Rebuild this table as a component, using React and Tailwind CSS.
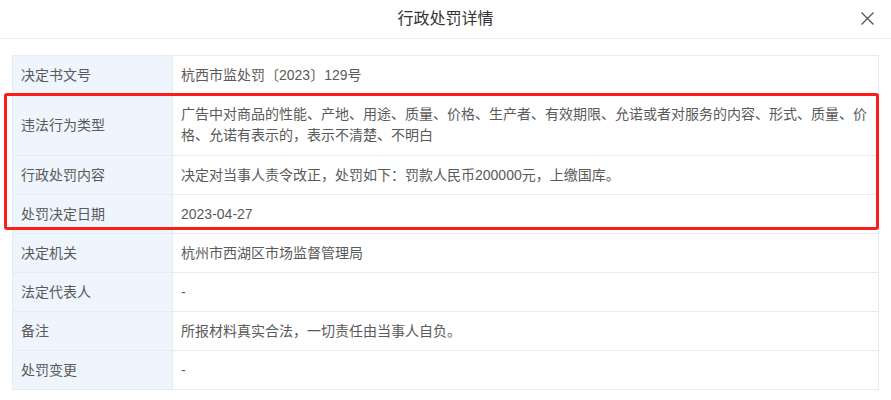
import React from "react";

const rows = [
  { label: "决定书文号", value: "杭西市监处罚〔2023〕129号" },
  {
    label: "违法行为类型",
    value:
      "广告中对商品的性能、产地、用途、质量、价格、生产者、有效期限、允诺或者对服务的内容、形式、质量、价格、允诺有表示的，表示不清楚、不明白",
    multi: true,
  },
  { label: "行政处罚内容", value: "决定对当事人责令改正，处罚如下：罚款人民币200000元，上缴国库。" },
  { label: "处罚决定日期", value: "2023-04-27" },
  { label: "决定机关", value: "杭州市西湖区市场监督管理局" },
  { label: "法定代表人", value: "-" },
  { label: "备注", value: "所报材料真实合法，一切责任由当事人自负。" },
  { label: "处罚变更", value: "-" },
];

export default function App() {
  return (
    <div
      className="relative w-[891px] h-[400px] bg-white overflow-hidden"
      style={{ fontFamily: '"Liberation Sans", "Noto Sans CJK SC", sans-serif' }}
    >
      <div className="relative h-[39px] flex items-center justify-center border-b border-[#ececec]">
        <span className="text-[16px] leading-[20px] text-[#333]">行政处罚详情</span>
        <button className="absolute right-[17px] top-[12px] w-[13px] h-[13px]">
          <svg width="13" height="13" viewBox="0 0 13 13">
            <path d="M0.5 0.5 L12.5 12.5 M12.5 0.5 L0.5 12.5" stroke="#555" strokeWidth="1.3" fill="none" />
          </svg>
        </button>
      </div>

      <div className="mx-3 mt-4 border border-[#e3ebf4] text-[14px] text-[#5a5a5a]">
        {rows.map((r, i) => (
          <div key={i} className={"flex " + (i > 0 ? "border-t border-[#e3ebf4]" : "")}>
            <div className="w-[160px] shrink-0 bg-[#eef5fc] border-r border-[#e3ebf4] px-2 flex items-center">
              <span className="leading-[20px]">{r.label}</span>
            </div>
            <div
              className={
                "flex-1 px-2 py-[9px] " + (r.multi ? "leading-[21px]" : "leading-[20px]")
              }
            >
              {r.value}
            </div>
          </div>
        ))}
      </div>

      <div className="absolute left-[4px] top-[93px] w-[875px] h-[137px] border-[3px] border-[#fb1c1c] rounded-[3px] pointer-events-none" />
    </div>
  );
}
